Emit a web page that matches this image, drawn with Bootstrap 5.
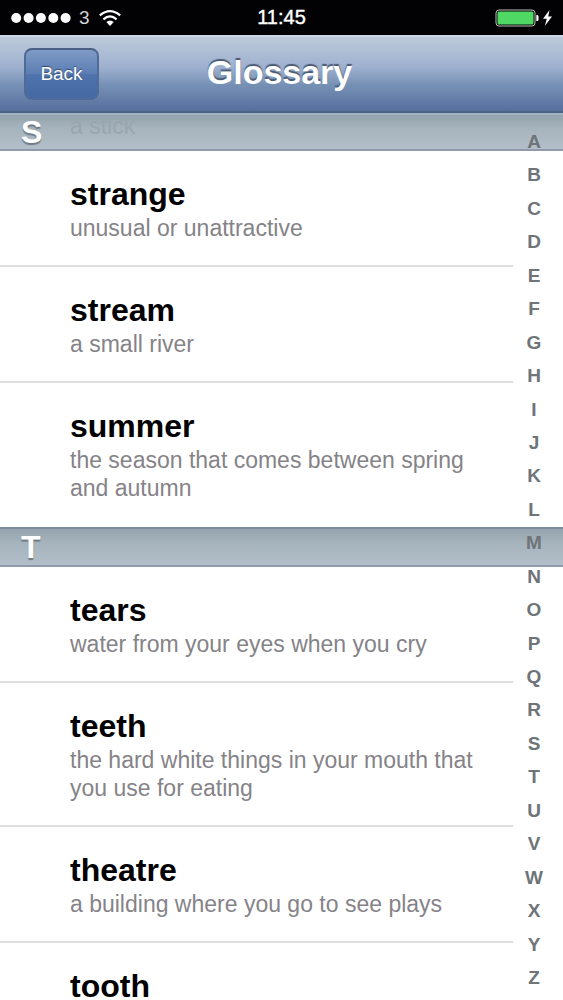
<!DOCTYPE html>
<html lang="en">
<head>
<meta charset="utf-8">
<meta name="viewport" content="width=device-width, initial-scale=1">
<title>Glossary</title>
<link href="https://cdn.jsdelivr.net/npm/bootstrap@5.3.0/dist/css/bootstrap.min.css" rel="stylesheet">
<style>
  body { font-family: "Liberation Sans", Arial, sans-serif; background: #fff; color: #000; }
  .status-bar { height: 35px; background: #020104; font-size: 19px; line-height: 35px; padding: 0 11px; }
  .side { flex: 1 1 0; }
  .carrier { color: #d4d4d6; }
  .clock { font-size: 20px; -webkit-text-stroke: 0.4px #fff; }
  .title-bar {
    height: 78px; padding: 0 28px 0 24px;
    background: linear-gradient(#bccada, #9fb1cf 40%, #7690b5 65%, #566f9d);
    border-top: 2px solid #ccd6e6; border-bottom: 2px solid #4c6388;
  }
  .title-bar h1 { font-size: 34px; line-height: 40px; padding-bottom: 4px; text-shadow: 0 -2px 1px #4a5a74; }
  .back {
    width: 75px; height: 52px; padding: 0; border: 2px solid #4f6b98; border-top-color: #4a5f85; border-radius: 8px;
    background: linear-gradient(#7f9bc6, #5b7db3 50%, #4f74ad 51%, #4569a3);
    color: #fff; font-size: 19px; text-shadow: 0 -1px 1px #34496c;
  }
  .back:hover, .back:active { color: #fff; background: #4569a3; }
  .section-head {
    height: 40px; padding-left: 21px; font-size: 32px; line-height: 37px; color: #fff;
    background: linear-gradient(#93a3ac, #a6b4bd 40%, #b2bec8);
    border-top: 2px solid #7d8c9b; border-bottom: 2px solid #9299ab;
    text-shadow: 0 2px 1px #6d7a84;
  }
  .section-pinned { height: 38px; line-height: 35px; border-top-color: #a3b4c0; }
  .passing { left: 70px; top: -6px; font-size: 23px; color: #98a6af; text-shadow: none; }
  .entry { padding: 24px 24px 23px 70px; margin-right: 50px; border-bottom: 2px solid #dedee0; }
  .entry:last-child { border-bottom-color: transparent; }
  .entry dt { font-size: 32px; line-height: 39px; }
  .entry dd { font-size: 23px; line-height: 28px; color: #858388; }
  .letters { top: 18px; bottom: 11px; right: 17px; width: 24px; }
  .letters a { color: #6e7478; font-size: 19px; line-height: 22px; font-weight: 700; text-decoration: none; }
</style>
</head>
<body class="vh-100 d-flex flex-column overflow-hidden">

<div class="status-bar d-flex align-items-center text-white flex-shrink-0">
  <div class="side d-flex align-items-center">
    <svg width="60" height="12" viewBox="0 0 60 12" fill="#fff" aria-label="Signal">
      <circle cx="5.2" cy="6" r="5"/><circle cx="17.6" cy="6" r="5"/><circle cx="29.9" cy="6" r="5"/><circle cx="42.3" cy="6" r="5"/><circle cx="54.6" cy="6" r="5"/>
    </svg>
    <span class="carrier mx-2">3</span>
    <svg width="24" height="18" viewBox="0 0 24 18" aria-label="Wi-Fi">
      <g fill="none" stroke="#fff" stroke-width="2.2"><path d="M1.800 6.400Q12-2.200 22.200 6.400"/><path d="M5.400 10.300Q12 4.600 18.600 10.300"/></g>
      <path d="M8.300 13Q12 10 15.700 13L12 17Z" fill="#fff"/>
    </svg>
  </div>
  <div class="clock">11:45</div>
  <div class="side d-flex align-items-center justify-content-end">
    <svg width="57" height="18" viewBox="0 0 57 18" aria-label="Battery charging">
      <rect x="1" y="1" width="39" height="16" rx="3" fill="none" stroke="#b8c4ba" stroke-width="1"/>
      <rect x="2.500" y="2.500" width="36" height="13" rx="1.500" fill="#4fd964"/>
      <path d="M41.300 6h1q1.200 0 1.200 1.500v3q0 1.500-1.200 1.500h-1z" fill="#fff"/>
      <path d="M54.500 1L48 9.800H51.800L49.800 17L57 7.600H53.200Z" fill="#fff"/>
    </svg>
  </div>
</div>

<header class="title-bar d-flex align-items-center flex-shrink-0">
  <div class="side d-flex"><button type="button" class="btn back">Back</button></div>
  <h1 class="m-0 fw-bold text-white">Glossary</h1>
  <div class="side"></div>
</header>

<main class="position-relative flex-grow-1 overflow-hidden">
  <section>
    <h2 class="section-head section-pinned m-0 fw-bold position-relative overflow-hidden"><span class="passing position-absolute fw-normal">a stick</span><span class="position-relative">S</span></h2>
    <dl class="m-0">
      <div class="entry"><dt>strange</dt><dd class="m-0">unusual or unattractive</dd></div>
      <div class="entry"><dt>stream</dt><dd class="m-0">a small river</dd></div>
      <div class="entry"><dt>summer</dt><dd class="m-0">the season that comes between spring and autumn</dd></div>
    </dl>
  </section>
  <section>
    <h2 class="section-head m-0 fw-bold">T</h2>
    <dl class="m-0">
      <div class="entry"><dt>tears</dt><dd class="m-0">water from your eyes when you cry</dd></div>
      <div class="entry"><dt>teeth</dt><dd class="m-0">the hard white things in your mouth that you use for eating</dd></div>
      <div class="entry"><dt>theatre</dt><dd class="m-0">a building where you go to see plays</dd></div>
      <div class="entry"><dt>tooth</dt></div>
    </dl>
  </section>

  <nav class="letters position-absolute d-flex flex-column justify-content-between text-center" aria-label="Index">
    <a href="#">A</a><a href="#">B</a><a href="#">C</a><a href="#">D</a><a href="#">E</a><a href="#">F</a><a href="#">G</a><a href="#">H</a><a href="#">I</a><a href="#">J</a><a href="#">K</a><a href="#">L</a><a href="#">M</a><a href="#">N</a><a href="#">O</a><a href="#">P</a><a href="#">Q</a><a href="#">R</a><a href="#">S</a><a href="#">T</a><a href="#">U</a><a href="#">V</a><a href="#">W</a><a href="#">X</a><a href="#">Y</a><a href="#">Z</a>
  </nav>
</main>

<script src="https://cdn.jsdelivr.net/npm/bootstrap@5.3.0/dist/js/bootstrap.bundle.min.js"></script>
</body>
</html>
